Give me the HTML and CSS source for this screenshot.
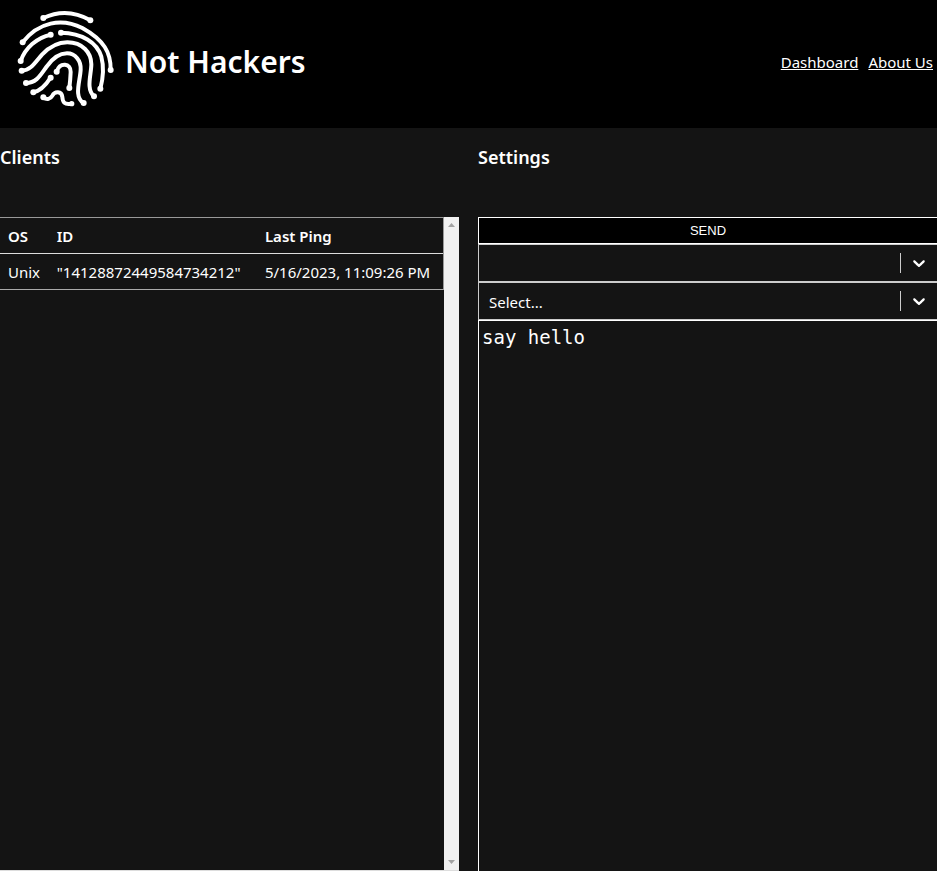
FILE: index.html
```html
<!DOCTYPE html>
<html lang="en">
<head>
<meta charset="utf-8">
<title>Not Hackers</title>
<link rel="stylesheet" href="styles.css">
</head>
<body>
<header class="topbar">
  <svg class="logo" viewBox="0 0 375 384" aria-hidden="true">
    <g class="ridges">
      <path d="M130 54Q201 21 271 61"/>
      <path d="M68 127C116 66 184 53 247 84C312 120 333 158 332 210"/>
      <path d="M62 183C75 145 111 112 152 104"/>
      <path d="M183 98C246 99 291 127 304 170C311 196 310 232 301 266"/>
      <path d="M65 212C94 211 107 185 126 164C150 139 177 127 202 127C248 127 274 158 274 193C274 224 257 266 282 289"/>
      <path d="M78 249C109 249 121 226 139 201C158 174 179 160 201 160C227 160 243 183 242 208C241 242 220 291 251 309"/>
      <path d="M170 215C180 185 213 190 212 216Q211 240 208 264"/>
      <path d="M100 277C122 273 139 253 152 233"/>
      <path d="M130 292C141 301 151 297 157 287C164 273 185 272 187 291C188 307 193 315 215 311"/>
    </g>
    <g class="tips">
      <circle cx="130" cy="54" r="9"/><circle cx="271" cy="61" r="9"/>
      <circle cx="68" cy="127" r="9"/><circle cx="332" cy="210" r="9"/>
      <circle cx="62" cy="183" r="9"/><circle cx="152" cy="104" r="9"/>
      <circle cx="183" cy="98" r="9"/><circle cx="301" cy="266" r="9"/>
      <circle cx="65" cy="212" r="9"/><circle cx="282" cy="289" r="9"/>
      <circle cx="78" cy="249" r="9"/><circle cx="251" cy="309" r="9"/>
      <circle cx="170" cy="215" r="9"/><circle cx="208" cy="264" r="9"/>
      <circle cx="100" cy="277" r="9"/><circle cx="152" cy="233" r="9"/>
      <circle cx="130" cy="292" r="9"/><circle cx="215" cy="311" r="8"/>
    </g>
  </svg>
  <div class="heading">
    <h1>Not Hackers</h1>
    <nav class="links">
      <a href="#dashboard">Dashboard</a>
      <a href="#about">About Us</a>
    </nav>
  </div>
</header>
<main class="panels">
  <section class="panel">
    <h2>Clients</h2>
    <div class="clients">
      <table>
        <thead>
          <tr><th class="os">OS</th><th class="id">ID</th><th>Last Ping</th></tr>
        </thead>
        <tbody>
          <tr><td>Unix</td><td>"14128872449584734212"</td><td>5/16/2023, 11:09:26 PM</td></tr>
        </tbody>
      </table>
      <div class="scrollbar" aria-hidden="true">
        <svg viewBox="0 0 15 15"><path d="M4 10h7L7.500 6z"/></svg>
        <svg viewBox="0 0 15 15"><path d="M4 5h7L7.500 9z"/></svg>
      </div>
    </div>
  </section>
  <section class="panel">
    <h2>Settings</h2>
    <form class="settings">
      <button type="button">SEND</button>
      <div class="picker">
        <select aria-label="Client"><option></option></select>
        <svg viewBox="0 0 20 20" aria-hidden="true"><path d="M4.516 7.548c0.436-0.446 1.043-0.481 1.576 0l3.908 3.747 3.908-3.747c0.533-0.481 1.141-0.446 1.574 0 0.436 0.445 0.408 1.197 0 1.615-0.406 0.418-4.695 4.502-4.695 4.502-0.217 0.223-0.502 0.335-0.787 0.335s-0.570-0.112-0.789-0.335c0 0-4.287-4.084-4.695-4.502s-0.436-1.170 0-1.615z"/></svg>
      </div>
      <div class="picker">
        <select aria-label="Command"><option>Select...</option></select>
        <svg viewBox="0 0 20 20" aria-hidden="true"><path d="M4.516 7.548c0.436-0.446 1.043-0.481 1.576 0l3.908 3.747 3.908-3.747c0.533-0.481 1.141-0.446 1.574 0 0.436 0.445 0.408 1.197 0 1.615-0.406 0.418-4.695 4.502-4.695 4.502-0.217 0.223-0.502 0.335-0.787 0.335s-0.570-0.112-0.789-0.335c0 0-4.287-4.084-4.695-4.502s-0.436-1.170 0-1.615z"/></svg>
      </div>
      <textarea aria-label="Script" spellcheck="false">say hello</textarea>
    </form>
  </section>
</main>
</body>
</html>
```
FILE: styles.css
```css
* {
  box-sizing: border-box;
}

body {
  margin: 0;
  min-height: 100vh;
  display: flex;
  flex-direction: column;
  background: #141414;
  color: #fff;
  font: 15px/20px "Noto Sans", sans-serif;
}

.topbar {
  display: flex;
  padding-right: 4px;
  background: #000;
}

.logo {
  width: 125px;
  height: 128px;
}

.heading {
  flex: 1;
  display: flex;
  align-items: center;
  justify-content: space-between;
  padding-bottom: 4px;
}

.ridges {
  fill: none;
  stroke: #fff;
  stroke-width: 12;
  stroke-linecap: round;
}

.tips {
  fill: #fff;
}

h1 {
  margin: 0;
  font-size: 30px;
  line-height: 40px;
  font-weight: 600;
}

.links {
  display: flex;
  gap: 10px;
}

.links a {
  color: #fff;
}

.panels {
  flex: 1;
  display: grid;
  grid-template-columns: 1fr 1fr;
  gap: 19px;
}

.panel {
  display: flex;
  flex-direction: column;
  min-width: 0;
}

h2 {
  margin: 0;
  padding: 18px 0 49px;
  font-size: 18px;
  line-height: 22px;
  font-weight: 600;
}

.clients {
  flex: 1;
  display: flex;
  align-items: flex-start;
  border-bottom: 1px solid #ddd;
}

table {
  flex: 1;
  border-collapse: separate;
  border-spacing: 0;
  border: 1px solid #999;
  border-width: 1px 1px 0 0;
}

th,
td {
  height: 36px;
  padding: 0 8px;
  text-align: left;
  white-space: nowrap;
  border-bottom: 1px solid #ddd;
}

th {
  font-weight: 600;
}

td {
  border-color: #aaa;
}

.os {
  width: 11%;
}

.id {
  width: 47%;
}

.scrollbar {
  align-self: stretch;
  flex: none;
  width: 15px;
  display: flex;
  flex-direction: column;
  justify-content: space-between;
  background: #f1f1f1;
  fill: #a3a3a3;
}

.scrollbar svg {
  width: 15px;
  height: 15px;
}

.settings {
  flex: 1;
  display: flex;
  flex-direction: column;
}

button {
  height: 27px;
  border: 1px solid #fff;
  border-right: 0;
  background: #000;
  color: #fff;
  font: 13px/15px "Liberation Sans", sans-serif;
}

.picker {
  display: grid;
  align-items: center;
  height: 38px;
  border: 1px solid #ccc;
  border-right: 0;
}

.picker > * {
  grid-area: 1 / 1;
}

.picker select {
  appearance: none;
  width: 100%;
  height: 36px;
  padding: 2px 46px 0 10px;
  border: 0;
  background: transparent;
  color: #fff;
  font: inherit;
}

.picker svg {
  justify-self: end;
  box-sizing: content-box;
  width: 20px;
  height: 20px;
  padding: 0 8px;
  border-left: 1px solid #ccc;
  fill: #fff;
  pointer-events: none;
}

textarea {
  flex: 1;
  width: 100%;
  padding: 4px 3px;
  border: 1px solid #fff;
  border-width: 1px 0 0 1px;
  background: #141414;
  color: #fff;
  font: 19px/24px "DejaVu Sans Mono", monospace;
  resize: none;
}
```
